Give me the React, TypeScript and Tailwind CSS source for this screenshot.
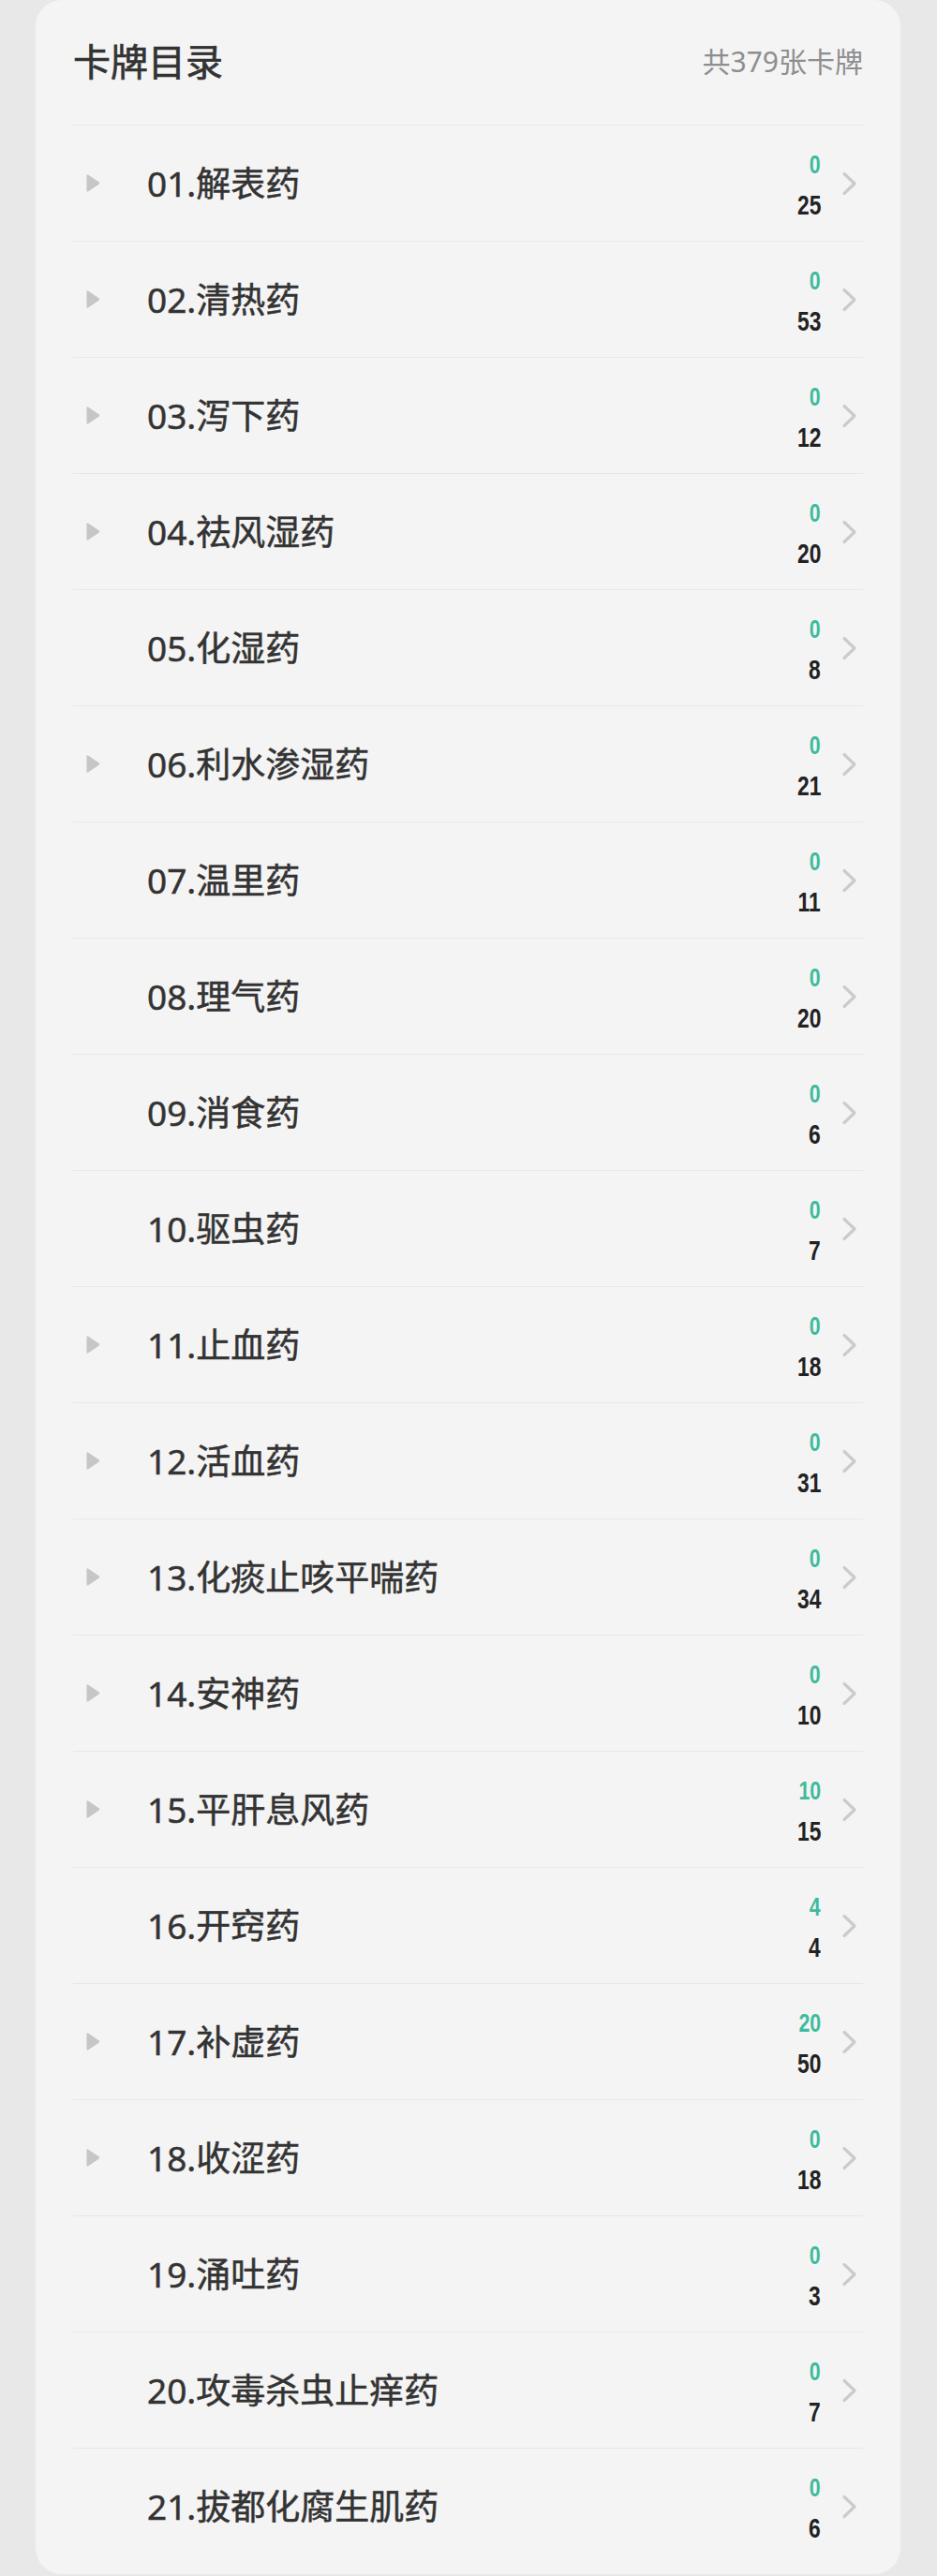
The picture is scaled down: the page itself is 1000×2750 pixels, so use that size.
const CATEGORIES = [
  { name: "01.解表药", sub: true, done: 0, total: 25 },
  { name: "02.清热药", sub: true, done: 0, total: 53 },
  { name: "03.泻下药", sub: true, done: 0, total: 12 },
  { name: "04.祛风湿药", sub: true, done: 0, total: 20 },
  { name: "05.化湿药", sub: false, done: 0, total: 8 },
  { name: "06.利水渗湿药", sub: true, done: 0, total: 21 },
  { name: "07.温里药", sub: false, done: 0, total: 11 },
  { name: "08.理气药", sub: false, done: 0, total: 20 },
  { name: "09.消食药", sub: false, done: 0, total: 6 },
  { name: "10.驱虫药", sub: false, done: 0, total: 7 },
  { name: "11.止血药", sub: true, done: 0, total: 18 },
  { name: "12.活血药", sub: true, done: 0, total: 31 },
  { name: "13.化痰止咳平喘药", sub: true, done: 0, total: 34 },
  { name: "14.安神药", sub: true, done: 0, total: 10 },
  { name: "15.平肝息风药", sub: true, done: 10, total: 15 },
  { name: "16.开窍药", sub: false, done: 4, total: 4 },
  { name: "17.补虚药", sub: true, done: 20, total: 50 },
  { name: "18.收涩药", sub: true, done: 0, total: 18 },
  { name: "19.涌吐药", sub: false, done: 0, total: 3 },
  { name: "20.攻毒杀虫止痒药", sub: false, done: 0, total: 7 },
  { name: "21.拔都化腐生肌药", sub: false, done: 0, total: 6 },
]

const CJK = "font-['Noto_Sans','Noto_Sans_CJK_SC',sans-serif]"
// узкие жирные цифры счётчиков
const NUM = "font-['Liberation_Sans',sans-serif] font-bold leading-[43px] origin-right scale-x-[0.76]"

function Triangle() {
  return (
    <svg width="16" height="21" viewBox="0 0 16 21">
      <path d="M1.5 2.5 Q1.5 0.5 3.3 1.7 L14.5 9.2 Q15.8 10.5 14.5 11.8 L3.3 19.3 Q1.5 20.5 1.5 18.5 Z" fill="#c6c6c6" />
    </svg>
  )
}

function Chevron() {
  return (
    <svg width="17" height="26" viewBox="0 0 17 26">
      <polyline points="3,2.5 14,13 3,23.5" fill="none" stroke="#cbcbcb" strokeWidth="3.2" strokeLinecap="round" strokeLinejoin="round" />
    </svg>
  )
}

export default function App() {
  return (
    <div className="min-h-[2750px] w-[1000px] bg-[#e8e8e8]">
      <div className="ml-[38px] w-[923px] rounded-[28px] bg-[#f4f4f4] px-[40px] pb-[11px]">
        {/* шапка */}
        <div className="flex h-[133px] items-center justify-between pb-[1px]">
          <span className={`${CJK} text-[40px] font-normal leading-none text-[#333333] [-webkit-text-stroke:0.7px_#333333]`}>卡牌目录</span>
          <span className={`${CJK} text-[30px] leading-none text-[#8e8e8e]`}>共379张卡牌</span>
        </div>

        {CATEGORIES.map(c => (
          <div key={c.name} className="flex h-[124px] items-center border-t border-[#e7e7e7]">
            <div className="flex w-[79px] items-center pl-[13px]">
              {c.sub && <Triangle />}
            </div>
            <div className={`${CJK} flex-1 text-[37px] font-normal leading-none text-[#333333] [-webkit-text-stroke:0.5px_#333333]`}>{c.name}</div>
            <div className="flex flex-col items-end pt-[2px]">
              <span className={`${NUM} text-[28px] text-[#3dbb9c]`}>{c.done}</span>
              <span className={`${NUM} text-[30px] text-[#222222]`}>{c.total}</span>
            </div>
            <div className="ml-[22px] mr-[6px] flex items-center">
              <Chevron />
            </div>
          </div>
        ))}
      </div>
    </div>
  )
}
